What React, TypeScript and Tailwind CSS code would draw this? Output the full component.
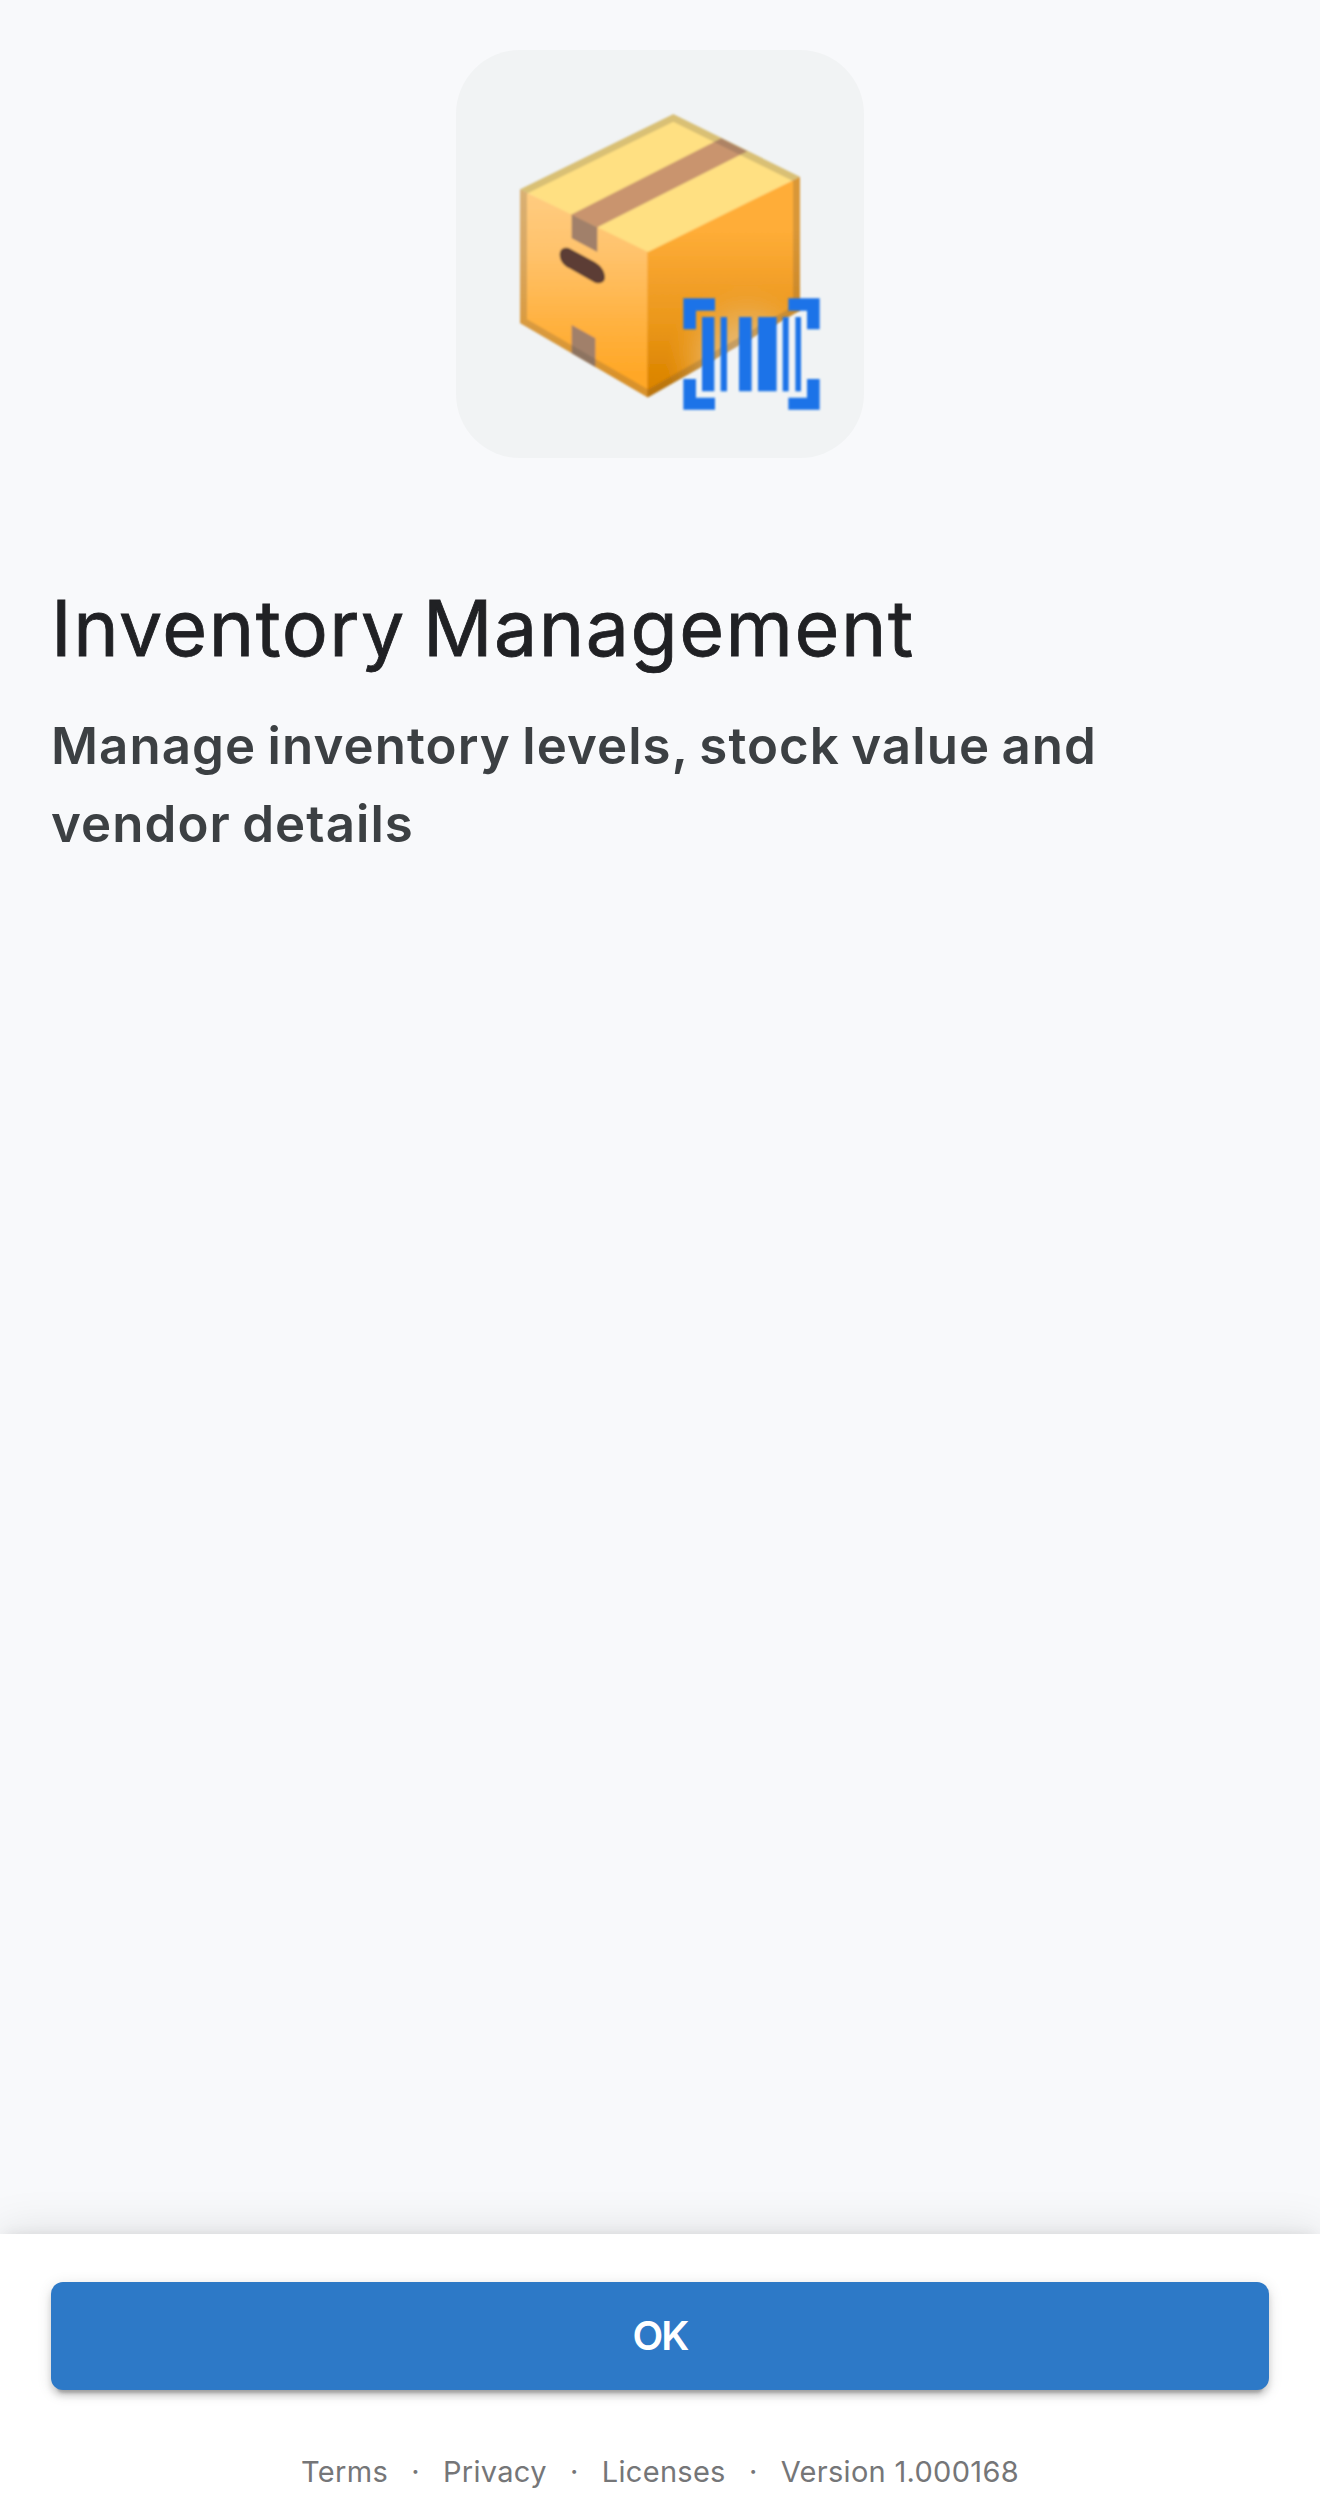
function PackageIcon() {
  return (
    <svg viewBox="48 60 1224 1224" className="size-[408px]" aria-hidden="true">
      <defs>
        <linearGradient id="left" x1="0" y1="490" x2="0" y2="1100" gradientUnits="userSpaceOnUse">
          <stop offset="0" stopColor="#ffcc80" />
          <stop offset="0.3" stopColor="#ffc26b" />
          <stop offset="0.65" stopColor="#ffb13f" />
          <stop offset="0.9" stopColor="#ffa726" />
        </linearGradient>
        <linearGradient id="right" x1="0" y1="600" x2="0" y2="1100" gradientUnits="userSpaceOnUse">
          <stop offset="0" stopColor="#ffad38" />
          <stop offset="0.1" stopColor="#fba932" />
          <stop offset="0.3" stopColor="#f3a02a" />
          <stop offset="0.55" stopColor="#eb981b" />
          <stop offset="0.8" stopColor="#e08a07" />
          <stop offset="1" stopColor="#d98200" />
        </linearGradient>
        <radialGradient id="glow" cx="920" cy="990" r="240" gradientUnits="userSpaceOnUse">
          <stop offset="0" stopColor="#e8c087" />
          <stop offset="0.4" stopColor="#e8b05a" />
          <stop offset="0.6" stopColor="#eaa947" stopOpacity="0.85" />
          <stop offset="1" stopColor="#ef9f2a" stopOpacity="0" />
        </radialGradient>
        <clipPath id="outline">
          <path d="M240 478 700 252 1080 440V842L624 1103 240 880Z" />
        </clipPath>
        <clipPath id="side">
          <path d="M624 666 1080 440V842L624 1103Z" />
        </clipPath>
        <filter id="soft" x="-5%" y="-5%" width="110%" height="110%">
          <feGaussianBlur stdDeviation="3" />
        </filter>
      </defs>
      <g filter="url(#soft)">
        <g clipPath="url(#outline)">
          <path fill="url(#left)" d="M240 478 624 660V1103L240 880Z" />
          <path fill="url(#right)" d="M622 660 1080 440V842L622 1103Z" />
          <g clipPath="url(#side)">
            <circle cx="920" cy="990" r="240" fill="url(#glow)" />
          </g>
          <path fill="#ffe082" d="M240 478 700 252 1080 440 624 666Z" />
          <path fill="#c9946e" d="M393 554 844 325 922 364 472 592Z" />
          <path fill="#a1806a" d="M395 554 472 592V666L395 625Z" />
          <path fill="#a1806a" d="M395 885 466 925V1012L395 971Z" />
          <path
            fill="#5b3d35"
            d="M359 674C359 657 371 650 386 654L463 695C482 705 495 724 495 741C495 757 482 763 465 758L388 715C370 706 359 691 359 674Z"
          />
          <path
            fill="none"
            stroke="#424242"
            strokeOpacity="0.2"
            strokeWidth="42"
            d="M240 478 700 252 1080 440V842L624 1103 240 880Z"
          />
        </g>
      </g>
      <g fill="#1a73e8" filter="url(#soft)">
        <path d="M730 805H825V842H768V898H730Z" />
        <path d="M1045 805H1139V898H1101V842H1045Z" />
        <path d="M730 1047H768V1103H825V1139H730Z" />
        <path d="M1101 1047H1139V1139H1045V1103H1101Z" />
        <path d="M786 861H823V1084H786Z" />
        <path d="M842 861H861V1084H842Z" />
        <path d="M897 861H935V1084H897Z" />
        <path d="M954 861H1010V1084H954Z" />
        <path d="M1028 861H1046V1084H1028Z" />
        <path d="M1066 861H1083V1084H1066Z" />
      </g>
    </svg>
  );
}

function Separator() {
  return <span className="w-[55px] text-center tracking-normal">·</span>;
}

export default function App() {
  return (
    <div className="flex h-[2510px] w-full flex-col overflow-hidden bg-[#f8f9fb] font-['Inter',sans-serif]">
      <main className="flex flex-1 flex-col px-[51px] pt-[50px]">
        <div className="size-[408px] self-center overflow-hidden rounded-[64px] bg-[#f1f3f4]">
          <PackageIcon />
        </div>
        <h1 className="mt-[122px] text-[77px] leading-[96px] font-normal tracking-[1.5px] text-[#202124] [-webkit-text-stroke:0.8px_#202124] [word-spacing:-6px]">
          Inventory Management
        </h1>
        <p className="mt-[31px] max-w-[1100px] text-[51px] leading-[78px] font-semibold tracking-[1.07px] text-[#3c4043] [word-spacing:-2.6px]">
          Manage inventory levels, stock value and vendor details
        </p>
      </main>
      <footer className="flex h-[276px] flex-col bg-white px-[51px] pt-12 shadow-[0_-6px_12px_-6px_rgba(0,0,0,0.08),0_-3px_42px_rgba(0,0,0,0.1)]">
        <button className="flex h-[108px] w-full shrink-0 items-center justify-center rounded-xl bg-[#2d79c7] text-[40px] font-semibold tracking-[-2px] text-white shadow-[0_9px_3px_-6px_rgba(0,0,0,0.2),0_6px_6px_0_rgba(0,0,0,0.14),0_3px_15px_0_rgba(0,0,0,0.12)]">
          OK
        </button>
        <nav className="mt-16 flex justify-center text-[29px] leading-9 tracking-[0.3px] whitespace-nowrap text-[#757678]">
          <a>Terms</a>
          <Separator />
          <a>Privacy</a>
          <Separator />
          <a>Licenses</a>
          <Separator />
          <span>Version 1.000168</span>
        </nav>
      </footer>
    </div>
  );
}
